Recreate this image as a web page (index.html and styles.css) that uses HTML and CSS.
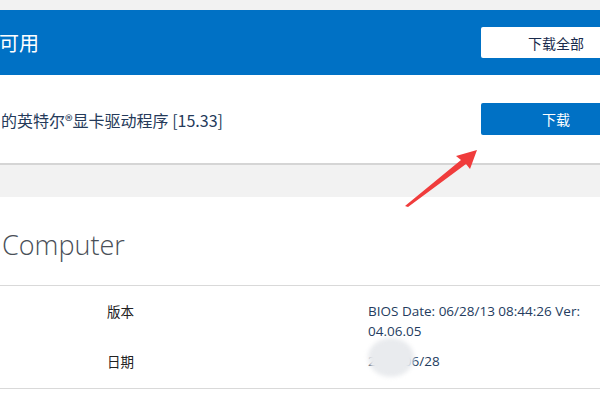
FILE: index.html
```html
<!DOCTYPE html>
<html lang="zh-CN">
<head>
<meta charset="utf-8">
<title>英特尔驱动程序</title>
<link rel="stylesheet" href="styles.css">
</head>
<body>
<div class="page">
  <div class="top-gap"></div>
  <div class="banner">
    <div class="banner-title">可用</div>
    <button class="btn btn-white">下载全部</button>
  </div>
  <div class="driver">
    <div class="driver-name">的英特尔®显卡驱动程序 [15.33]</div>
    <button class="btn btn-blue">下载</button>
  </div>
  <div class="gap"></div>
  <div class="card">
    <div class="card-title">Computer</div>
    <div class="info">
      <div class="label">版本</div>
      <div class="value">BIOS Date: 06/28/13 08:44:26 Ver: 04.06.05</div>
      <div class="label">日期</div>
      <div class="value">2013/06/28</div>
    </div>
    <div class="blur"></div>
  </div>
  <svg class="arrow" width="600" height="402" viewBox="0 0 600 402">
    <polygon points="405,206 461,160 456,156 477,150 470,169 466,164 408,207" fill="#f03c3c"/>
  </svg>
</div>
</body>
</html>
```

FILE: styles.css
```css
html, body {
  margin: 0;
  padding: 0;
}
body {
  background: #f2f2f2;
  font-family: "Open Sans", "Noto Sans CJK SC", sans-serif;
  overflow: hidden;
}
.page {
  position: relative;
  width: 600px;
  height: 402px;
  overflow: hidden;
}
.top-gap {
  height: 10px;
}
.banner {
  height: 65px;
  background: #0071c5;
  display: flex;
  align-items: center;
  justify-content: space-between;
}
.banner-title {
  color: #fff;
  font-family: "Noto Sans CJK SC", sans-serif;
  font-size: 20px;
  margin-left: -1px;
}
.btn {
  flex-shrink: 0;
  width: 150px;
  height: 32px;
  margin-right: -31px;
  border: none;
  border-radius: 2px;
  font-family: "Noto Sans CJK SC", sans-serif;
  font-size: 14px;
  padding: 0;
}
.btn-white {
  background: #fff;
  color: #1a2b4c;
  height: 31px;
}
.btn-blue {
  background: #0071c5;
  color: #fff;
}
.driver {
  height: 88px;
  background: #fff;
  border-bottom: 2px solid #d5d5d5;
  display: flex;
  align-items: center;
  justify-content: space-between;
}
.driver-name {
  font-family: "Noto Sans CJK SC", sans-serif;
  font-size: 16px;
  color: #253a5a;
  margin-left: 1px;
  margin-top: 2px;
}
.gap {
  height: 32px;
}
.card {
  position: relative;
  background: #fff;
  height: 205px;
}
.card-title {
  font-family: "Open Sans", sans-serif;
  font-weight: 300;
  font-size: 27px;
  line-height: 40px;
  color: #4a4f57;
  padding: 28px 0 20px 2px;
  border-bottom: 1px solid #d9d9d9;
}
.info {
  display: grid;
  grid-template-columns: 261px 230px;
  padding: 15px 0 17px 107px;
  row-gap: 10px;
  border-bottom: 1px solid #d9d9d9;
  font-size: 13.5px;
  line-height: 20px;
}
.label {
  font-family: "Noto Sans CJK SC", sans-serif;
  color: #222;
}
.value {
  font-family: "Open Sans", sans-serif;
  color: #243c5e;
}
.blur {
  position: absolute;
  left: 368px;
  top: 141px;
  width: 46px;
  height: 39px;
  border-radius: 50%;
  background: #e9ebee;
  filter: blur(2px);
}
.arrow {
  position: absolute;
  left: 0;
  top: 0;
  pointer-events: none;
}
```
